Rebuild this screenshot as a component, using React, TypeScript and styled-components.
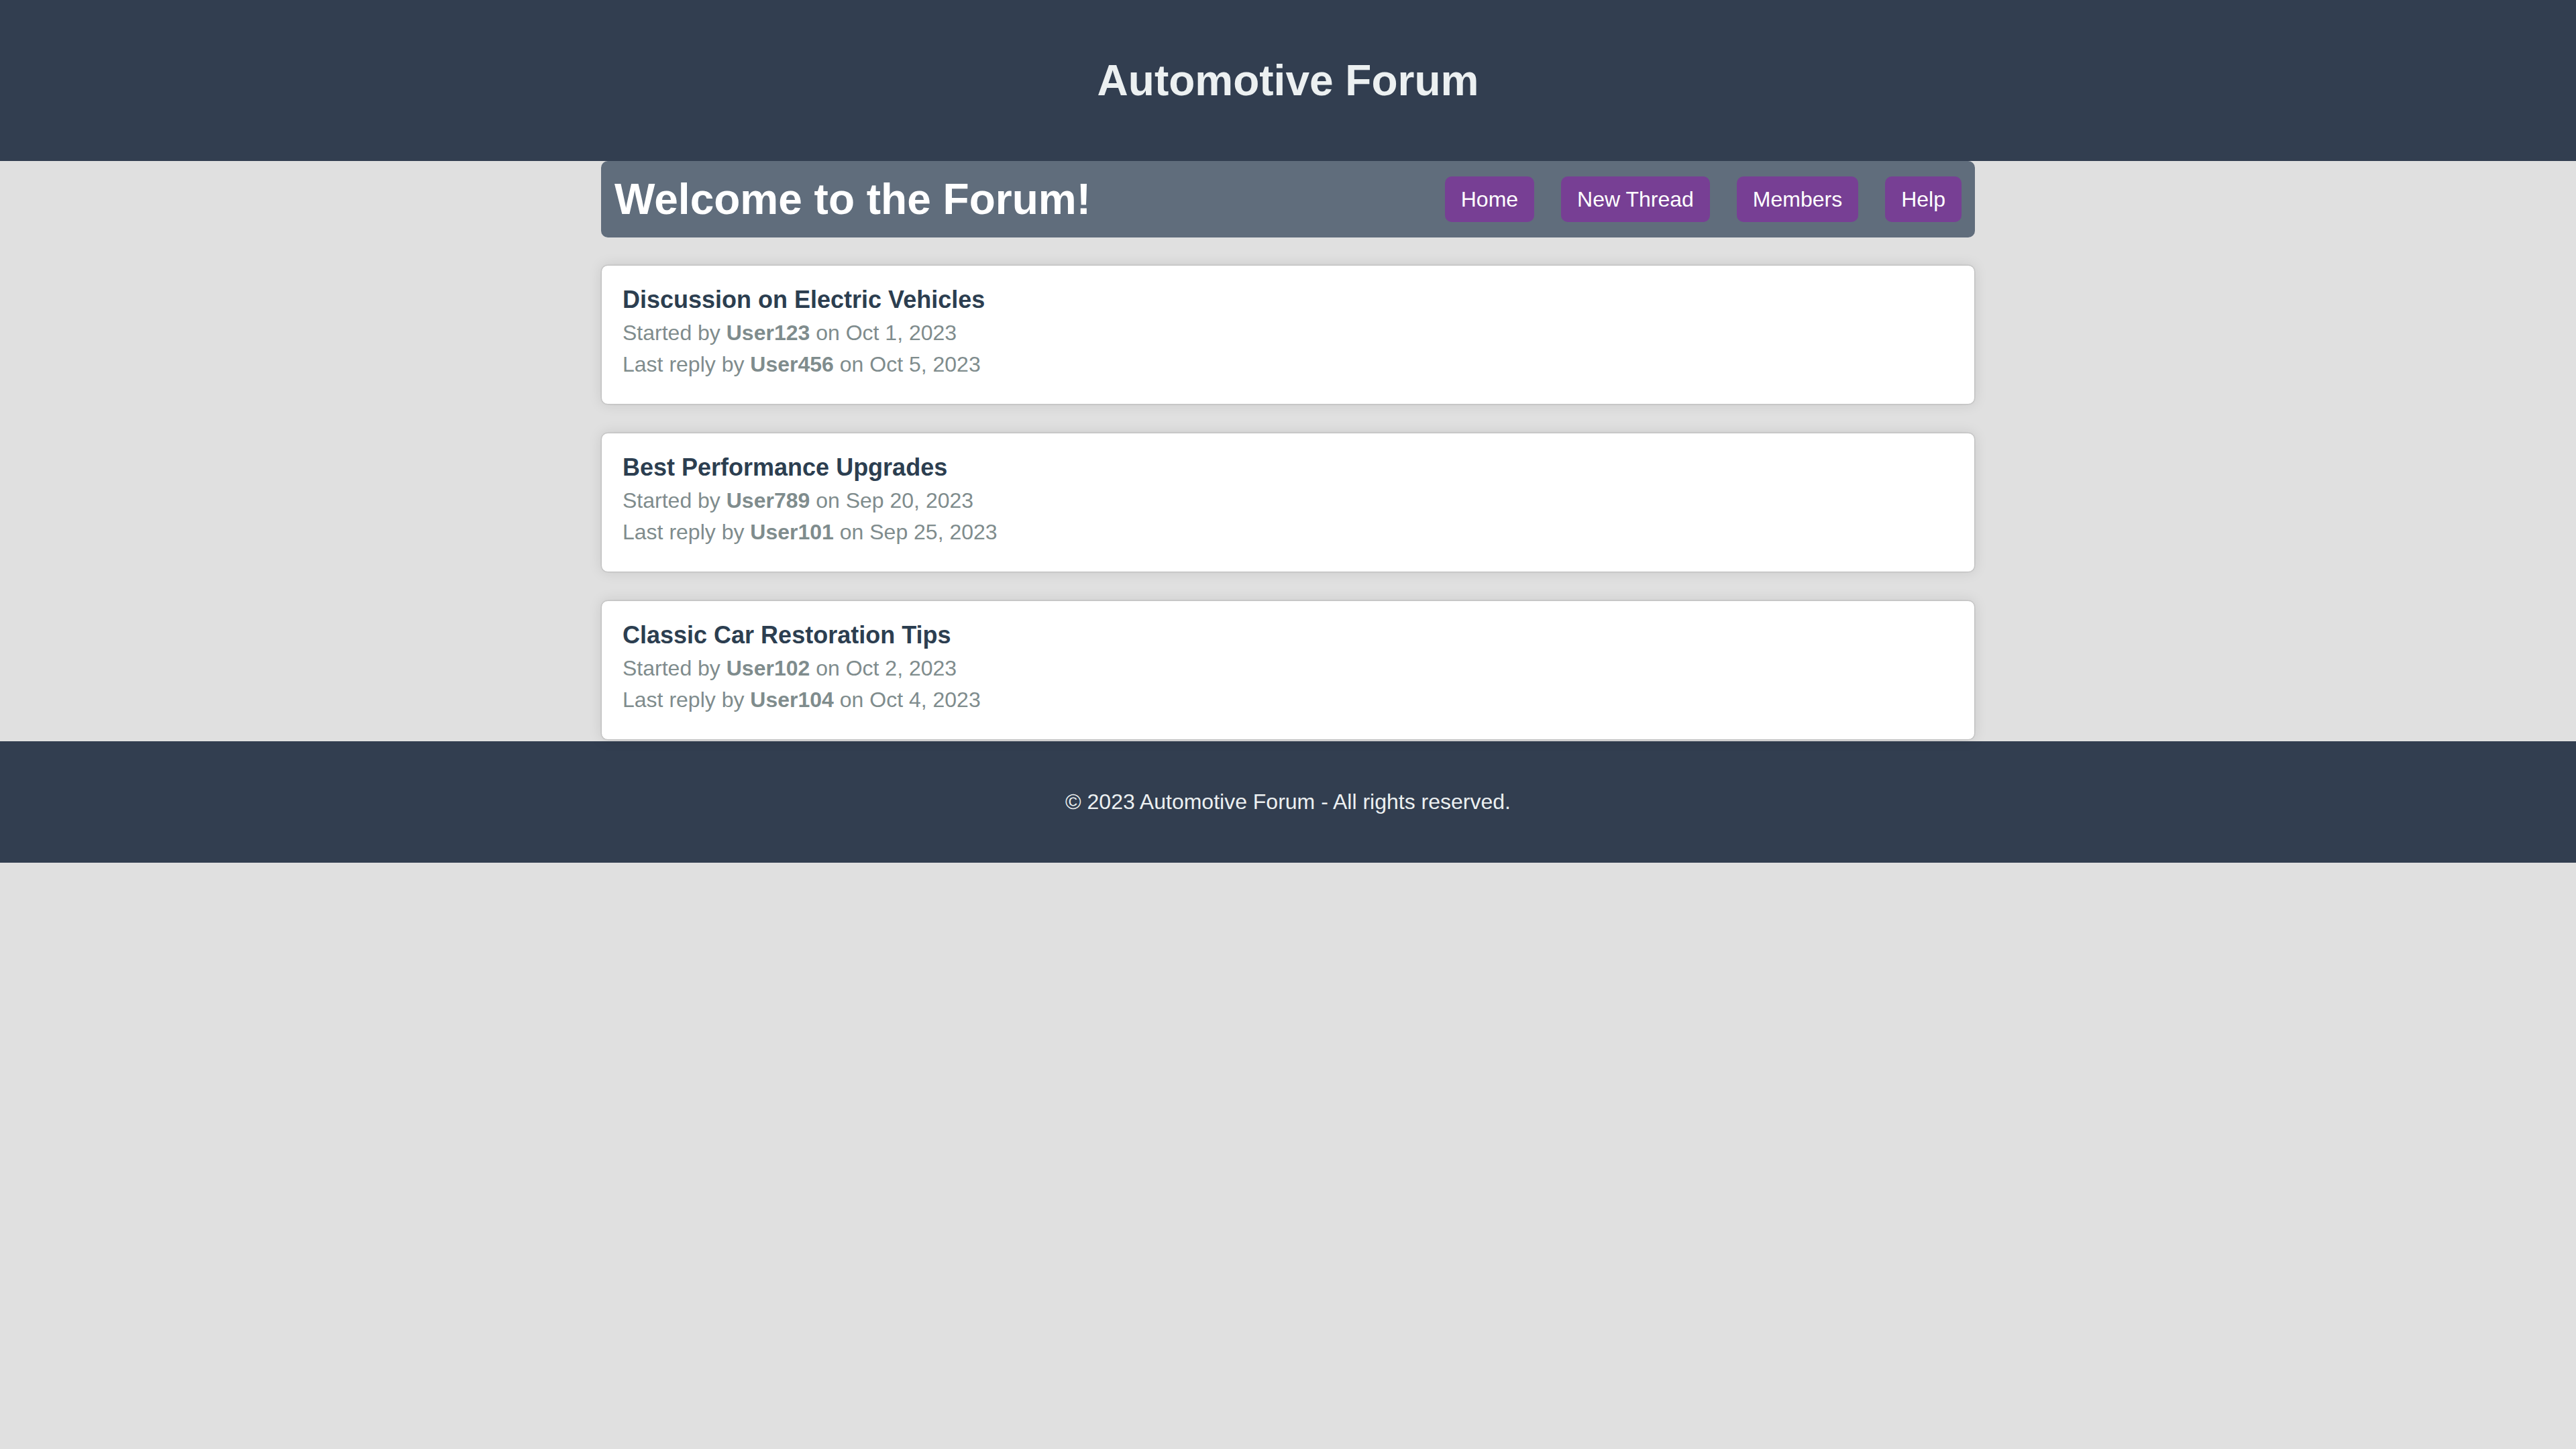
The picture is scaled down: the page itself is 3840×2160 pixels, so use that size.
import React from "react";
import styled, { createGlobalStyle } from "styled-components";

const GlobalStyle = createGlobalStyle`
  html, body {
    margin: 0;
    padding: 0;
    background: #e0e0e0;
    font-family: "Liberation Sans", Arial, Helvetica, sans-serif;
  }
`;

const Header = styled.header`
  background: #323e50;
  color: #ecf0f1;
  padding: 40px;
  text-align: center;
`;

const SiteTitle = styled.h1`
  margin: 43px 0;
  font-size: 64px;
  font-weight: bold;
`;

const Container = styled.main`
  max-width: 2048px;
  margin: 0 auto;
`;

const Nav = styled.nav`
  display: flex;
  align-items: center;
  justify-content: space-between;
  background: #606d7c;
  padding: 20px;
  border-radius: 10px;
`;

const Welcome = styled.h1`
  margin: 0;
  font-size: 64px;
  font-weight: bold;
  color: #ffffff;
`;

const NavLinks = styled.div`
  display: flex;
  align-items: center;
  gap: 40px;
`;

const NavLink = styled.a`
  display: block;
  background: #773f94;
  color: #ffffff;
  font-size: 32px;
  line-height: 36.8px;
  padding: 16px 24px;
  border-radius: 10px;
  text-decoration: none;
`;

const ThreadList = styled.section`
  display: flex;
  flex-direction: column;
  gap: 42px;
  margin-top: 41px;
`;

const Card = styled.article`
  background: #ffffff;
  border: 1px solid #c2c2c2;
  border-radius: 10px;
  padding: 30px 31px;
  box-shadow: 0 0 2px rgba(0, 0, 0, 0.15), 0 0 20px rgba(0, 0, 0, 0.1);
`;

const ThreadTitle = styled.h3`
  margin: 0;
  font-size: 36px;
  font-weight: bold;
  color: #2c3e50;
`;

const Meta = styled.p`
  margin: 10px 0;
  font-size: 32px;
  color: #7f8c8d;
`;

const User = styled.strong`
  font-weight: bold;
`;

const Footer = styled.footer`
  background: #323e50;
  color: #ecf0f1;
  text-align: center;
  padding: 40px;
  margin-top: 2px;
`;

const FooterText = styled.p`
  margin: 32px 0;
  font-size: 32px;
`;

const threads = [
  {
    title: "Discussion on Electric Vehicles",
    starter: "User123",
    started: "Oct 1, 2023",
    replier: "User456",
    replied: "Oct 5, 2023",
  },
  {
    title: "Best Performance Upgrades",
    starter: "User789",
    started: "Sep 20, 2023",
    replier: "User101",
    replied: "Sep 25, 2023",
  },
  {
    title: "Classic Car Restoration Tips",
    starter: "User102",
    started: "Oct 2, 2023",
    replier: "User104",
    replied: "Oct 4, 2023",
  },
];

export default function App() {
  return (
    <>
      <GlobalStyle />
      <Header>
        <SiteTitle>Automotive Forum</SiteTitle>
      </Header>
      <Container>
        <Nav>
          <Welcome>Welcome to the Forum!</Welcome>
          <NavLinks>
            <NavLink href="#">Home</NavLink>
            <NavLink href="#">New Thread</NavLink>
            <NavLink href="#">Members</NavLink>
            <NavLink href="#">Help</NavLink>
          </NavLinks>
        </Nav>
        <ThreadList>
          {threads.map((t) => (
            <Card key={t.title}>
              <ThreadTitle>{t.title}</ThreadTitle>
              <Meta>
                Started by <User>{t.starter}</User> on {t.started}
              </Meta>
              <Meta>
                Last reply by <User>{t.replier}</User> on {t.replied}
              </Meta>
            </Card>
          ))}
        </ThreadList>
      </Container>
      <Footer>
        <FooterText>© 2023 Automotive Forum - All rights reserved.</FooterText>
      </Footer>
    </>
  );
}
